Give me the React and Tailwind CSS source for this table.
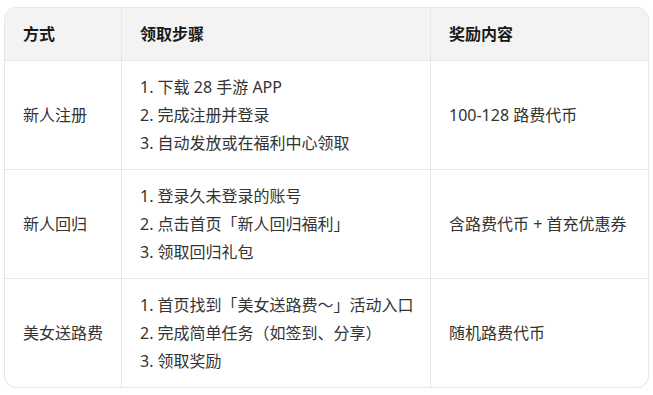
import React from "react";

const rows = [
  {
    way: "新人注册",
    steps: ["1. 下载 28 手游 APP", "2. 完成注册并登录", "3. 自动发放或在福利中心领取"],
    reward: "100-128 路费代币",
  },
  {
    way: "新人回归",
    steps: ["1. 登录久未登录的账号", "2. 点击首页「新人回归福利」", "3. 领取回归礼包"],
    reward: "含路费代币 + 首充优惠券",
  },
  {
    way: "美女送路费",
    steps: ["1. 首页找到「美女送路费～」活动入口", "2. 完成简单任务（如签到、分享）", "3. 领取奖励"],
    reward: "随机路费代币",
  },
];

export default function App() {
  return (
    <div className="w-[653px] h-[395px] bg-white pt-[7px] px-[4px] font-['Noto_Sans','Noto_Sans_CJK_SC',sans-serif] text-[16px]">
      <div className="border border-[#e6e6e6] rounded-xl overflow-hidden">
        <div className="grid grid-cols-[117px_309px_1fr] bg-[#f3f3f3] font-bold text-[#1a1a1a] leading-[28px]">
          <div className="px-[18px] py-3 border-r border-[#e6e6e6]">方式</div>
          <div className="px-[18px] py-3 border-r border-[#e6e6e6]">领取步骤</div>
          <div className="px-[18px] py-3">奖励内容</div>
        </div>
        {rows.map((r) => (
          <div
            key={r.way}
            className="grid grid-cols-[117px_309px_1fr] border-t border-[#e6e6e6] text-[#333333] leading-[28px]"
          >
            <div className="px-[18px] py-3 border-r border-[#e6e6e6] flex items-center">{r.way}</div>
            <div className="px-[18px] py-3 border-r border-[#e6e6e6] flex flex-col">
              {r.steps.map((s) => (
                <div key={s} className="whitespace-nowrap">{s}</div>
              ))}
            </div>
            <div className="px-[18px] py-3 flex items-center whitespace-nowrap">{r.reward}</div>
          </div>
        ))}
      </div>
    </div>
  );
}
